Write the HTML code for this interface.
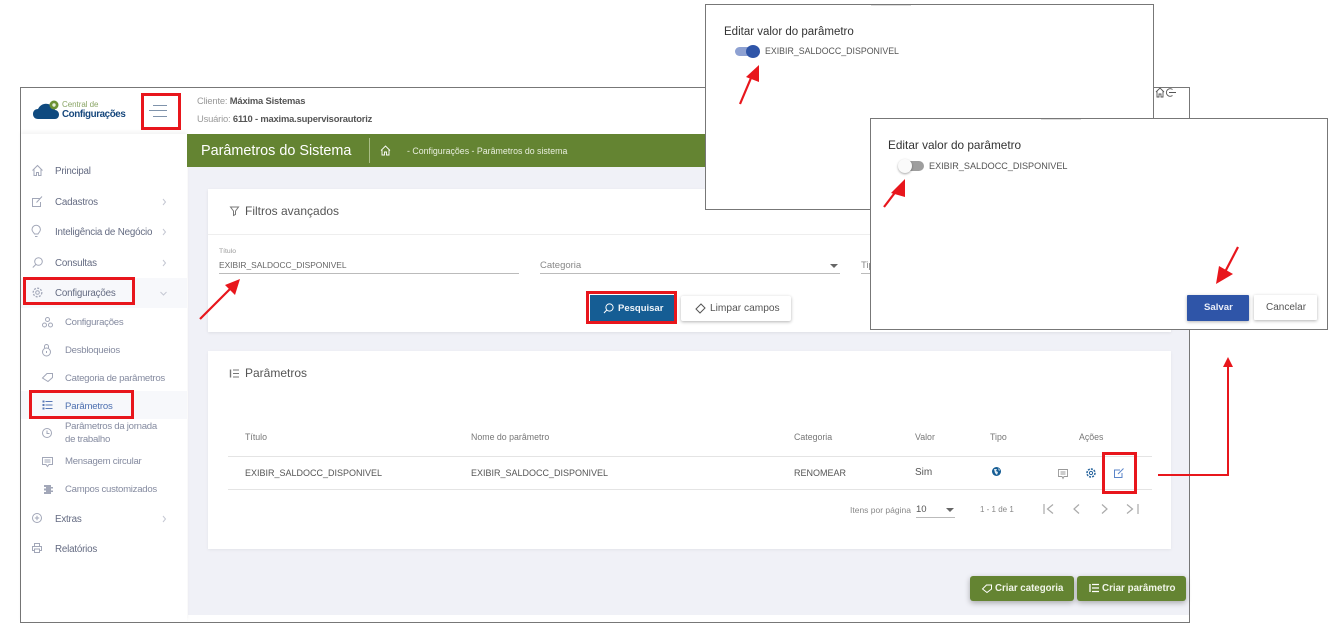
<!DOCTYPE html>
<html lang="pt"><head><meta charset="utf-8"><title>Parâmetros do Sistema</title>
<style>
html,body{margin:0;padding:0;background:#fff}
body{width:1335px;height:628px;position:relative;overflow:hidden;font-family:"Liberation Sans",sans-serif;color:#666}
.a,.t,svg{position:absolute}
.a{box-sizing:border-box}
.t{white-space:nowrap;line-height:14px}
.nav{font-size:9.800px;letter-spacing:-.2px;color:#646b82}
.sub{font-size:9.600px;letter-spacing:-.27px;color:#858ba0}
.h{font-size:8.800px;color:#777}
.c{font-size:9px;color:#555}
.red{border:3px solid #e8161c;box-sizing:border-box;position:absolute}
svg{overflow:visible}
.i{fill:none;stroke:#a2a7b8;stroke-width:1}
</style></head><body>
<!-- frame -->
<div class="a" style="left:20px;top:87px;width:1170px;height:536px;border:1px solid #777"></div>
<div class="a" style="left:188px;top:134px;width:1001px;height:481px;background:#f0f1f7"></div>
<div class="a" style="left:21px;top:134px;width:166px;height:488px;background:#fff;box-shadow:0 -2px 4px rgba(0,0,0,.05)"></div>
<div class="a" style="left:187px;top:134px;width:520px;height:33px;background:#648432"></div>

<!-- logo -->
<svg style="left:33px;top:100px" width="30" height="22" viewBox="0 0 30 22"><path d="M0 14c0-3 2-5 5-5 2-4 6-6 10-5 4 1 6 3 7 6 2 0 4 2 4 4.500 0 3-2 4.500-4 4.500H5c-3 0-5-2-5-5z" fill="#0f4a7f"/><circle cx="21" cy="5" r="4.500" fill="#6d9134"/><circle cx="21" cy="5" r="1.700" fill="#e8efdc"/></svg>
<div class="t" style="left:62px;top:98px;font-size:8px;letter-spacing:-.05px;color:#8aa565">Central de</div>
<div class="t" style="left:62px;top:107.500px;font-size:9.800px;letter-spacing:-.4px;font-weight:700;color:#17487d">Configurações</div>
<div class="red" style="left:141px;top:93px;width:40px;height:37px"></div>
<svg style="left:148px;top:104px" width="24" height="14"><path d="M5 1.500h14M1 6.500h18M5 12.500h14" stroke="#7f93ab" fill="none"/></svg>
<div class="t" style="left:197px;top:94px;font-size:9.400px;letter-spacing:-.18px;color:#999">Cliente: <b style="color:#555">Máxima Sistemas</b></div>
<div class="t" style="left:197px;top:111.500px;font-size:9.400px;letter-spacing:-.18px;color:#999">Usuário: <b style="color:#555">6110 - maxima.supervisorautoriz</b></div>
<div class="t" style="left:201px;top:143px;font-size:14.400px;line-height:16px;color:#fff">Parâmetros do Sistema</div>
<div class="a" style="left:369px;top:138px;width:1px;height:25px;background:#a9bd85"></div>
<svg style="left:380px;top:145px" width="11" height="11" viewBox="0 0 11 11"><path d="M1 5.500 5.500 1 10 5.500M2 5v5h2.500V7h2v3H9V5" fill="none" stroke="#fff" stroke-width=".9"/></svg>
<div class="t" style="left:407px;top:144px;font-size:8.800px;color:#e8eedd">- Configurações - Parâmetros do sistema</div>

<!-- sidebar -->
<div class="a" style="left:21px;top:278px;width:166px;height:30px;background:#f7f8fb"></div>
<div class="a" style="left:21px;top:391px;width:166px;height:28px;background:#f7f8fb"></div>
<svg class="i" style="left:32px;top:165px" width="11" height="11"><path d="M.5 5.500 5.500.5l5 5M2 4.500V10.500h2.500V7.500h2v3H9V4.500"/></svg>
<div class="t nav" style="left:55px;top:165px">Principal</div>
<svg class="i" style="left:32px;top:196px" width="11" height="11"><path d="M8 2.500H.5v8h8V6M4.500 6.500l5.500-6"/></svg>
<div class="t nav" style="left:55px;top:196px">Cadastros</div>
<svg class="i" style="left:31px;top:225px" width="11" height="13"><path d="M3.500 9C3 7.500 1 7 1 4.500a4.200 4.200 0 0 1 8.400 0C9.400 7 7.500 7.500 7 9zM4 11.500h2.500"/></svg>
<div class="t nav" style="left:55px;top:226px">Inteligência de Negócio</div>
<svg class="i" style="left:32px;top:257px" width="11" height="11"><circle cx="6.500" cy="4.500" r="3.800"/><path d="M3.800 7.500 .8 10.500"/></svg>
<div class="t nav" style="left:55px;top:257px">Consultas</div>
<svg class="i" style="left:32px;top:287px" width="11" height="11"><circle cx="5.500" cy="5.500" r="1.800"/><circle cx="5.500" cy="5.500" r="4.300" stroke-dasharray="2 1.300" stroke-width="1.300"/></svg>
<div class="t nav" style="left:55px;top:287px">Configurações</div>
<svg style="left:162px;top:199px" width="6" height="70" fill="none" stroke="#c5c8d3"><path d="M1 0 3.500 3 1 6M1 30 3.500 33 1 36M1 61 3.500 64 1 67"/></svg>
<svg style="left:160px;top:291px" width="7" height="5" fill="none" stroke="#c5c8d3"><path d="M.5 1 3.500 4 6.500 1"/></svg>
<div class="red" style="left:23px;top:277px;width:112px;height:28px"></div>

<svg class="i" style="left:42px;top:317px" width="11" height="11"><circle cx="5.500" cy="2.500" r="2"/><circle cx="2.500" cy="8" r="2"/><circle cx="8.500" cy="8" r="2"/></svg>
<div class="t sub" style="left:65px;top:316px">Configurações</div>
<svg class="i" style="left:42px;top:344px" width="10" height="13"><rect x=".5" y="4" width="8" height="8" rx="4"/><path d="M2.500 4V2.500a2 2 0 0 1 4 0V4M4.500 7v2"/></svg>
<div class="t sub" style="left:65px;top:344px">Desbloqueios</div>
<svg class="i" style="left:42px;top:372px" width="11" height="11"><path d="M.5 6 5 1.500h5.500v4l-4.500 4z"/></svg>
<div class="t sub" style="left:65px;top:372px">Categoria de parâmetros</div>
<svg style="left:42px;top:400px" width="11" height="10" fill="none" stroke="#5878b6"><path d="M3.500 1.500h7M3.500 5h7M3.500 8.500h7"/><path d="M.5 1.500h2M.5 5h2M.5 8.500h2" stroke-width="2"/></svg>
<div class="t" style="left:65px;top:400px;font-size:9.600px;letter-spacing:-.2px;color:#4d6fb0">Parâmetros</div>
<div class="red" style="left:29px;top:390px;width:105px;height:29px"></div>
<div class="t sub" style="left:65px;top:420px">Parâmetros da jornada</div>
<div class="t sub" style="left:65px;top:433px">de trabalho</div>
<svg class="i" style="left:42px;top:428px" width="10" height="10"><circle cx="5" cy="5" r="4.500"/><path d="M5 2.500v3h2.500"/></svg>
<div class="t sub" style="left:65px;top:455px">Mensagem circular</div>
<svg class="i" style="left:42px;top:457px" width="11" height="10"><path d="M.5.500h10v7H7L5.500 9.500 4 7.500H.5zM2.500 3h6M2.500 5h6"/></svg>
<div class="t sub" style="left:65px;top:483px">Campos customizados</div>
<svg style="left:43px;top:485px" width="10" height="9" fill="#a2a7b8"><path d="M1 0h7v2h2v1.500H8v2h2V7H8v2H1V7h2V5.500H1V3.500h2V2H1z"/></svg>
<svg class="i" style="left:32px;top:513px" width="10" height="10"><circle cx="5" cy="5" r="4.500"/><path d="M5 2.800v4.400M2.800 5h4.400"/></svg>
<div class="t nav" style="left:55px;top:513px">Extras</div>
<svg style="left:162px;top:516px" width="6" height="7" fill="none" stroke="#c5c8d3"><path d="M1 0 3.500 3 1 6"/></svg>
<svg class="i" style="left:32px;top:543px" width="10" height="10"><path d="M2.500 3V.5h5V3M2.500 7.500H.5V3.500h9v4h-2M2.500 6h5v3.500h-5z"/></svg>
<div class="t nav" style="left:55px;top:543px">Relatórios</div>

<!-- filters card -->
<div class="a" style="left:208px;top:189px;width:963px;height:143px;background:#fff;box-shadow:0 1px 3px rgba(0,0,0,.08)"></div>
<div class="a" style="left:208px;top:234px;width:963px;height:1px;background:#eeeeee"></div>
<svg style="left:230px;top:206px" width="9" height="10" fill="none" stroke="#777"><path d="M.5 1h8L5.500 5v3.500L3.500 9.500V5z"/></svg>
<div class="t" style="left:245px;top:203px;font-size:12px;line-height:16px;color:#555">Filtros avançados</div>
<div class="t" style="left:219px;top:247px;font-size:6.800px;line-height:10px;color:#999">Título</div>
<div class="t" style="left:219px;top:258px;font-size:8.400px;color:#666">EXIBIR_SALDOCC_DISPONIVEL</div>
<div class="a" style="left:219px;top:273px;width:300px;height:1px;background:#bbb"></div>
<div class="t" style="left:540px;top:259px;font-size:9.500px;color:#888">Categoria</div>
<div class="a" style="left:540px;top:273px;width:300px;height:1px;background:#bbb"></div>
<div class="a" style="left:830px;top:264px;border:4px solid transparent;border-top:4px solid #666;border-bottom:0"></div>
<div class="t" style="left:861px;top:259px;font-size:9.500px;color:#888">Tipo</div>
<div class="a" style="left:861px;top:273px;width:20px;height:1px;background:#bbb"></div>

<div class="a" style="left:590px;top:295px;width:84px;height:26px;background:#155d94"></div>
<div class="red" style="left:586px;top:291px;width:91px;height:33px"></div>
<svg style="left:603px;top:303px" width="11" height="11" fill="none" stroke="#fff"><circle cx="6.500" cy="4.500" r="3.600"/><path d="M3.800 7 1 10"/></svg>
<div class="t" style="left:618px;top:301.500px;font-size:9.500px;font-weight:700;color:#eef3f8">Pesquisar</div>
<div class="a" style="left:681px;top:296px;width:110px;height:25px;background:#fff;border-radius:2px;box-shadow:0 1px 3px rgba(0,0,0,.3)"></div>
<svg style="left:695px;top:303px" width="11" height="11" fill="none" stroke="#555"><path d="M1 6 6 1l4 4-5 5z"/></svg>
<div class="t" style="left:710px;top:301.500px;font-size:10.200px;color:#555">Limpar campos</div>

<!-- params card -->
<div class="a" style="left:208px;top:351px;width:963px;height:198px;background:#fff;box-shadow:0 1px 3px rgba(0,0,0,.06)"></div>
<svg style="left:230px;top:369px" width="9" height="9" fill="none" stroke="#777"><path d="M3 1h6M3 4.500h6M3 8h6"/><path d="M.5 .5v8" stroke-width="1.400"/></svg>
<div class="t" style="left:245px;top:365px;font-size:12px;line-height:16px;color:#555">Parâmetros</div>
<div class="t h" style="left:245px;top:429.500px">Título</div>
<div class="t h" style="left:471px;top:429.500px">Nome do parâmetro</div>
<div class="t h" style="left:794px;top:429.500px">Categoria</div>
<div class="t h" style="left:915px;top:429.500px">Valor</div>
<div class="t h" style="left:990px;top:429.500px">Tipo</div>
<div class="t h" style="left:1079px;top:429.500px">Ações</div>
<div class="a" style="left:228px;top:456px;width:924px;height:1px;background:#e4e4e4"></div>
<div class="a" style="left:228px;top:489px;width:924px;height:1px;background:#e4e4e4"></div>
<div class="t c" style="left:245px;top:465.500px">EXIBIR_SALDOCC_DISPONIVEL</div>
<div class="t c" style="left:471px;top:465.500px">EXIBIR_SALDOCC_DISPONIVEL</div>
<div class="t c" style="left:794px;top:465.500px">RENOMEAR</div>
<div class="t c" style="left:915px;top:465.500px;font-size:10px">Sim</div>
<svg style="left:992px;top:467px" width="9" height="9"><circle cx="4.500" cy="4.500" r="4.500" fill="#155d94"/><path d="M2 2h3l-1 2 2 1-1 3-2-2zM6 1l2 2-1 1z" fill="#dfe9f1"/></svg>
<svg style="left:1058px;top:469px" width="10" height="10" fill="none" stroke="#999" stroke-width=".9"><path d="M.5.500h9v7H6L5 9.500 4 7.500H.5zM2.500 3h5M2.500 5h5"/></svg>
<svg style="left:1086px;top:468px" width="10" height="10" fill="none" stroke="#25639c"><circle cx="5" cy="5" r="1.600"/><circle cx="5" cy="5" r="4" stroke-dasharray="2 1.100" stroke-width="1.500"/></svg>
<svg style="left:1114px;top:468px" width="10" height="10" fill="none" stroke="#5b85c9"><path d="M6 2H.5v7.500H8V5M4 6l5.500-5.500"/></svg>
<div class="red" style="left:1102px;top:452px;width:35px;height:42px"></div>
<div class="t" style="left:850px;top:503px;font-size:8.500px;color:#888">Itens por página</div>
<div class="t" style="left:916px;top:503px;font-size:9.500px;color:#555">10</div>
<div class="a" style="left:916px;top:517px;width:39px;height:1px;background:#bbb"></div>
<div class="a" style="left:946px;top:508px;border:4px solid transparent;border-top:4px solid #666;border-bottom:0"></div>
<div class="t" style="left:980px;top:502.500px;font-size:8px;color:#888">1 - 1 de 1</div>
<svg style="left:1043px;top:504px" width="96" height="11" fill="none" stroke="#aaa" stroke-width="1.200"><path d="M1 0v10M10 .5 4.500 5l5.500 4.500M36 .5 31 5l5 4.500M59 .5 64 5l-5 4.500M84 .5 89.500 5 84 9.500M95 0v10"/></svg>

<!-- FABs -->
<div class="a" style="left:970px;top:576px;width:104px;height:25px;background:#648432;border-radius:3px;box-shadow:0 2px 6px rgba(0,0,0,.3)"></div>
<div class="a" style="left:1077px;top:576px;width:109px;height:25px;background:#648432;border-radius:3px;box-shadow:0 2px 6px rgba(0,0,0,.3)"></div>
<svg style="left:982px;top:583px" width="10" height="10" fill="none" stroke="#fff"><path d="M.5 6 4.500 2H9.500v4L5 9.500z"/></svg>
<div class="t" style="left:995px;top:582px;font-size:9.700px;font-weight:700;color:#f1f5e9">Criar categoria</div>
<svg style="left:1089px;top:583px" width="10" height="10" fill="none" stroke="#fff"><path d="M3 1.500h7M3 5h7M3 8.500h7M1 1v8" stroke-width="1.300"/></svg>
<div class="t" style="left:1102px;top:582px;font-size:9.800px;font-weight:700;color:#f1f5e9">Criar parâmetro</div>

<!-- top-right icons -->
<svg style="left:1155px;top:87px" width="24" height="11" fill="none" stroke="#555" stroke-width=".9"><path d="M1 5 5 1l4 4M2 4.500V10h2V7h2v3h2V4.500"/><path d="M17.500 2.500a3.800 3.800 0 1 0 0 6M14 5.500h7"/></svg>

<!-- modal 1 -->
<div class="a" style="left:705px;top:4px;width:449px;height:206px;background:#fff;border:1px solid #777"></div>
<div class="a" style="left:871px;top:5px;width:40px;height:1px;background:#ddd"></div>
<div class="t" style="left:724px;top:24.500px;font-size:11.500px;color:#333">Editar valor do parâmetro</div>
<div class="a" style="left:735px;top:47px;width:22px;height:9px;border-radius:5px;background:#8ea1d2"></div>
<div class="a" style="left:746px;top:45px;width:14px;height:13px;border-radius:50%;background:#2f55a8"></div>
<div class="t" style="left:765px;top:44px;font-size:8.800px;color:#555">EXIBIR_SALDOCC_DISPONIVEL</div>

<!-- modal 2 -->
<div class="a" style="left:870px;top:118px;width:458px;height:212px;background:#fff;border:1px solid #777"></div>
<div class="a" style="left:1041px;top:119px;width:40px;height:1px;background:#ddd"></div>
<div class="t" style="left:888px;top:138px;font-size:11.800px;color:#333">Editar valor do parâmetro</div>
<div class="a" style="left:900px;top:161px;width:24px;height:10px;border-radius:5px;background:#9e9e9e"></div>
<div class="a" style="left:898px;top:159px;width:14px;height:14px;border-radius:50%;background:#fafafa;box-shadow:0 1px 2px rgba(0,0,0,.35)"></div>
<div class="t" style="left:929px;top:159px;font-size:9.100px;color:#555">EXIBIR_SALDOCC_DISPONIVEL</div>
<div class="a" style="left:1187px;top:295px;width:62px;height:26px;background:#2f55a8;border-radius:1px;box-shadow:0 1px 3px rgba(0,0,0,.3)"></div>
<div class="t" style="left:1204px;top:301px;font-size:9.600px;font-weight:700;color:#e9edf7">Salvar</div>
<div class="a" style="left:1254px;top:295px;width:63px;height:25px;background:#fff;border-radius:1px;box-shadow:0 1px 3px rgba(0,0,0,.3)"></div>
<div class="t" style="left:1266px;top:301px;font-size:10px;color:#555">Cancelar</div>

<!-- arrows -->
<svg style="left:0;top:0" width="1335" height="628" fill="none">
<g stroke="#e8161c" stroke-width="2.200"><path d="M200 319 230 289"/><path d="M740 104 751 78"/><path d="M884 207 897 190"/><path d="M1238 247 1225 272"/></g>
<g fill="#e8161c"><path d="M240 279 235 295 225 285z"/><path d="M759 65 759 82 746 77z"/><path d="M905 179 905 197 891 193z"/><path d="M1216 284 1219 266 1233 274z"/></g>
<path d="M1158 475H1228V366" stroke="#e8161c" stroke-width="2"/>
<path d="M1228 357 1233 367H1223z" fill="#e8161c"/>
</svg>
</body></html>
